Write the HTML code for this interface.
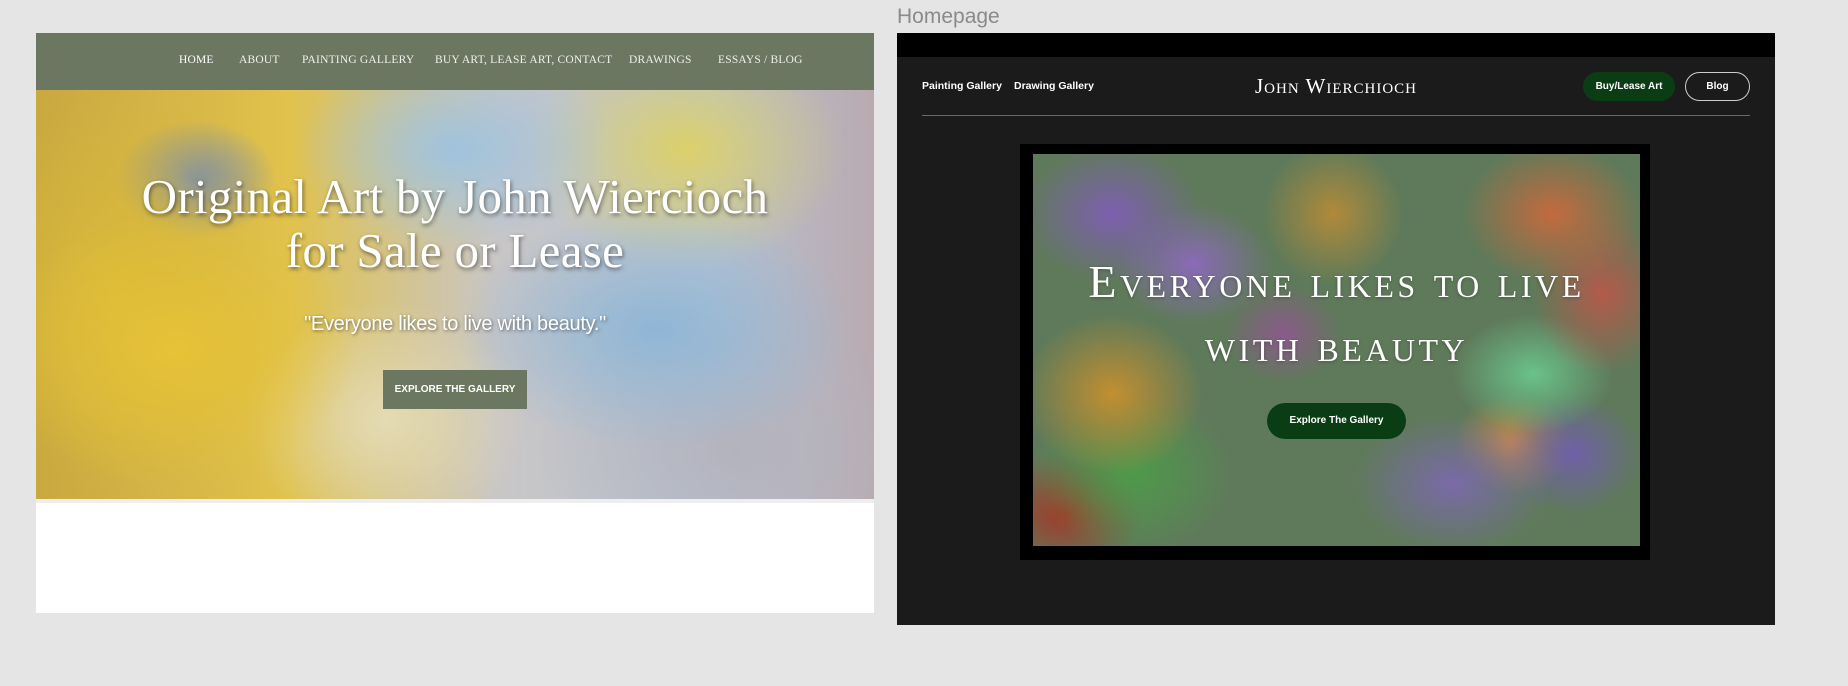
<!DOCTYPE html>
<html><head><meta charset="utf-8"><style>
*{margin:0;padding:0;box-sizing:border-box}
body{width:1848px;height:686px;background:#e5e5e5;position:relative;overflow:hidden;font-family:"Liberation Sans",sans-serif}
.a{position:absolute}
#L{left:36px;top:33px;width:838px;height:580px;background:#fff}
#nav{left:0;top:0;width:838px;height:57px;background:#6b7760}
#nav span{position:absolute;top:21px;font:11.5px "Liberation Serif",serif;color:#eef0ea;letter-spacing:.2px;white-space:nowrap}
#hero{left:0;top:57px;width:838px;height:409px;background:
radial-gradient(ellipse 180px 140px at 140px 260px,#e6c236,transparent),
radial-gradient(ellipse 160px 200px at 80px 200px,#d9b93a,transparent),
radial-gradient(ellipse 200px 120px at 620px 240px,#8fb6d6,transparent),
radial-gradient(ellipse 160px 100px at 420px 60px,#9fc3de,transparent),
radial-gradient(ellipse 160px 120px at 650px 60px,#dcd06a,transparent),
radial-gradient(ellipse 140px 120px at 350px 330px,#e4dbb4,transparent),
radial-gradient(ellipse 200px 140px at 700px 360px,#b4b3bd,transparent),
radial-gradient(ellipse 80px 60px at 160px 90px,#7089b8,transparent),
linear-gradient(90deg,#c9a840,#e0c24c 30%,#c9c6c6 55%,#b8c3d2 80%,#b9aab0)}
#hero h1{position:absolute;left:0;width:838px;top:80px;text-align:center;font:normal 49px/54px "Liberation Serif",serif;color:#fff;text-shadow:1px 2px 4px rgba(0,0,0,.5);letter-spacing:.3px}
#hero p{position:absolute;left:0;width:838px;top:223px;text-align:center;font:20px "Liberation Sans",sans-serif;color:#fff;text-shadow:1px 1px 3px rgba(0,0,0,.5);letter-spacing:-.3px}
#btn1{left:347px;top:280px;width:144px;height:39px;background:#6b7760;color:#fff;font:bold 10px/39px "Liberation Sans",sans-serif;text-align:center}
#R{left:897px;top:33px;width:878px;height:592px;background:#1b1b1b}
#lab{left:897px;top:5px;font:21px "Liberation Sans",sans-serif;color:#8a8a8a}
.nl{top:80px;font:bold 10.5px "Liberation Sans",sans-serif;color:#fff}
#logo{left:1234px;top:74px;width:204px;text-align:center;font:21px "Liberation Serif",serif;font-variant:small-caps;color:#fff;letter-spacing:1px;white-space:nowrap}
#frame{left:1020px;top:144px;width:630px;height:416px;background:#000}
#art{left:1033px;top:154px;width:607px;height:392px;background:
radial-gradient(ellipse 90px 70px at 80px 60px,#7e5fb0,transparent),
radial-gradient(ellipse 80px 60px at 160px 110px,#8a6ab8,transparent),
radial-gradient(ellipse 70px 70px at 300px 60px,#b08a3a,transparent),
radial-gradient(ellipse 90px 70px at 520px 60px,#c46a3e,transparent),
radial-gradient(ellipse 70px 80px at 570px 140px,#b35a4a,transparent),
radial-gradient(ellipse 80px 60px at 500px 220px,#6ac28a,transparent),
radial-gradient(ellipse 90px 80px at 80px 240px,#c28f30,transparent),
radial-gradient(ellipse 100px 80px at 100px 320px,#4e9a4a,transparent),
radial-gradient(ellipse 80px 60px at 30px 360px,#a03b2a,transparent),
radial-gradient(ellipse 100px 70px at 420px 330px,#7a6aa8,transparent),
radial-gradient(ellipse 70px 60px at 540px 300px,#7060a8,transparent),
radial-gradient(ellipse 60px 50px at 480px 290px,#c98a4a,transparent),
radial-gradient(ellipse 60px 50px at 250px 180px,#8a5a8a,transparent),
#5f7a5a}
#art h2{position:absolute;left:0;width:607px;top:96px;text-align:center;font:normal 46px/64px "Liberation Serif",serif;font-variant:small-caps;color:#fff;letter-spacing:3.5px;text-shadow:0 1px 3px rgba(0,0,0,.3)}
#btn2{left:1267px;top:403px;width:139px;height:36px;border-radius:18px;background:#0b3d14;color:#fff;font:bold 10px/36px "Liberation Sans",sans-serif;text-align:center}
</style></head><body>
<div class="a" id="L">
 <div class="a" id="nav"><span style="left:143px;color:#fff">HOME</span><span style="left:203px">ABOUT</span><span style="left:266px">PAINTING GALLERY</span><span style="left:399px">BUY ART, LEASE ART, CONTACT</span><span style="left:593px">DRAWINGS</span><span style="left:682px">ESSAYS / BLOG</span></div>
 <div class="a" id="hero"><h1>Original Art by John Wiercioch<br>for Sale or Lease</h1><p>"Everyone likes to live with beauty."</p><div class="a" id="btn1">EXPLORE THE GALLERY</div></div>
 <div class="a" style="left:0;top:466px;width:838px;height:4px;background:#eee"></div>
</div>
<div class="a" id="lab">Homepage</div>
<div class="a" id="R"><div class="a" style="left:0;top:0;width:878px;height:24px;background:#000"></div>
<div class="a" style="left:25px;top:82px;width:828px;height:1px;background:#6a6a6a"></div></div>
<div class="a nl" style="left:922px">Painting Gallery</div>
<div class="a nl" style="left:1014px">Drawing Gallery</div>
<div class="a" id="logo">John Wierchioch</div>
<div class="a" style="left:1583px;top:72px;width:92px;height:29px;border-radius:15px;background:#0b3d14;color:#fff;font:bold 10px/29px 'Liberation Sans',sans-serif;text-align:center">Buy/Lease Art</div>
<div class="a" style="left:1685px;top:72px;width:65px;height:29px;border-radius:15px;border:1px solid #ccc;color:#fff;font:bold 10px/27px 'Liberation Sans',sans-serif;text-align:center">Blog</div>
<div class="a" id="frame"></div>
<div class="a" id="art"><h2>Everyone likes to live<br>with beauty</h2></div>
<div class="a" id="btn2">Explore The Gallery</div>
</body></html>
